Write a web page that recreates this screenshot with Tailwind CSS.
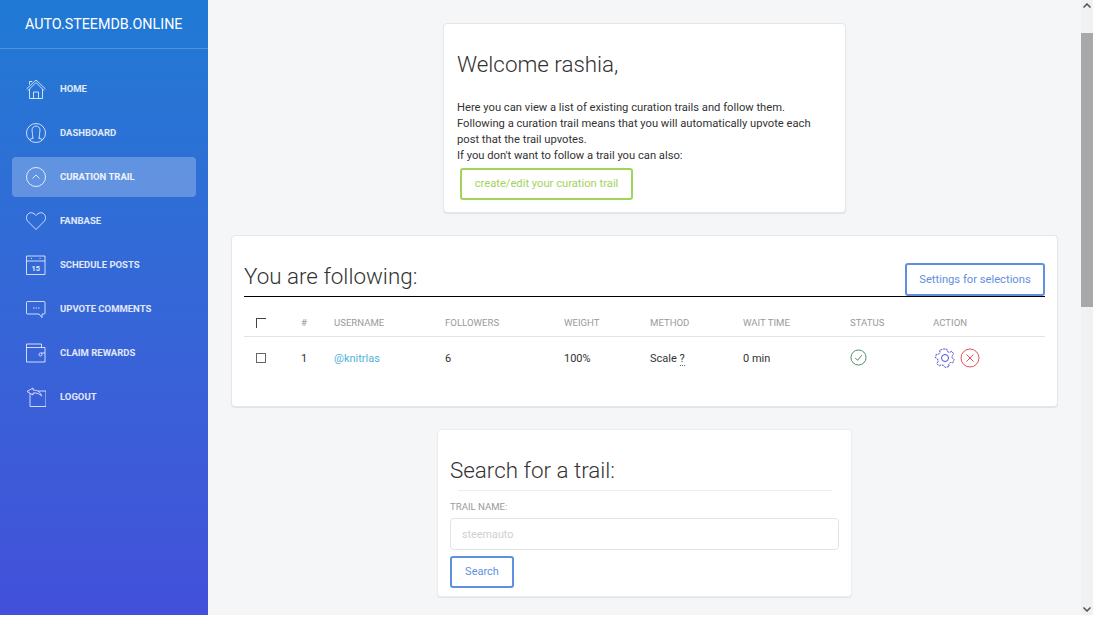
<!DOCTYPE html>
<html lang="en">
<head>
    <meta charset="UTF-8">
    <title>Curation Trail</title>
    <script src="https://cdn.jsdelivr.net/npm/@tailwindcss/browser@4"></script>
</head>
<body class="bg-white font-['Roboto',sans-serif] overflow-hidden">
    <div class="flex w-[1093px] h-[615px] overflow-hidden">
        <!-- Sidebar -->
        <aside class="w-[208px] shrink-0 bg-gradient-to-b from-[#1f7ad4] to-[#4250da] text-white">
            <div class="h-[49px] border-b border-white/20 pl-[25px] pt-[14px] text-[14.3px] leading-[20px]">AUTO.STEEMDB.ONLINE</div>
            <nav class="px-[12px] pt-[20px] flex flex-col gap-[4px]">
                <a class="h-[40px] rounded-[4px] flex items-center pl-[14px] gap-[14px] text-[9.5px] font-bold text-white/85">
                    <svg class="w-[20px] h-[20px]" viewBox="0 0 20 20" fill="none" stroke="currentColor" stroke-width="0.9"><path d="M0.5 10 L10 1 L19.5 10 M2 11.5 L10 3.5 L18 11.5 M3.5 10 V19.5 H16.5 V10 M7.5 19.5 V13 H12.5 V19.5 M3.5 5.5 V2.5 H6 V3"/></svg>
                    HOME
                </a>
                <a class="h-[40px] rounded-[4px] flex items-center pl-[14px] gap-[14px] text-[9.5px] font-bold text-white/85">
                    <svg class="w-[20px] h-[20px]" viewBox="0 0 20 20" fill="none" stroke="currentColor" stroke-width="0.9"><circle cx="10" cy="10" r="9.5"/><path d="M7 16 C7 13 6 10 6 7 C6 4.5 8 3 10 3 C12 3 14 4.5 14 7 C14 10 13 13 13 16 M3.5 16.5 L7 15 M16.5 16.5 L13 15"/></svg>
                    DASHBOARD
                </a>
                <a class="h-[40px] rounded-[4px] bg-white/25 flex items-center pl-[14px] gap-[14px] text-[9.5px] font-bold text-white/90">
                    <svg class="w-[20px] h-[20px]" viewBox="0 0 20 20" fill="none" stroke="currentColor" stroke-width="0.9"><circle cx="10" cy="10" r="9.5"/><path d="M6.5 11.5 L10 8 L13.5 11.5"/></svg>
                    CURATION TRAIL
                </a>
                <a class="h-[40px] rounded-[4px] flex items-center pl-[14px] gap-[14px] text-[9.5px] font-bold text-white/85">
                    <svg class="w-[20px] h-[20px]" viewBox="0 0 20 20" fill="none" stroke="currentColor" stroke-width="0.9"><path d="M10 18.5 L2 10.5 C0 8.5 0 5 2 3 C4 1 7.5 1.3 10 4.5 C12.5 1.3 16 1 18 3 C20 5 20 8.5 18 10.5 Z"/></svg>
                    FANBASE
                </a>
                <a class="h-[40px] rounded-[4px] flex items-center pl-[14px] gap-[14px] text-[9.5px] font-bold text-white/85">
                    <svg class="w-[20px] h-[20px]" viewBox="0 0 20 20" fill="none" stroke="currentColor" stroke-width="0.9"><path d="M0.5 1 H19 V19.5 H0.5 Z M0.5 6 H19 M5 3.5 H6 M13.5 3.5 H14.5"/><text x="9.8" y="16" text-anchor="middle" font-size="7.5" fill="currentColor" stroke="none">15</text></svg>
                    SCHEDULE POSTS
                </a>
                <a class="h-[40px] rounded-[4px] flex items-center pl-[14px] gap-[14px] text-[9.5px] font-bold text-white/85">
                    <svg class="w-[20px] h-[20px]" viewBox="0 0 20 20" fill="none" stroke="currentColor" stroke-width="0.9"><path d="M1.5 2.5 H18 Q19 2.5 19 3.5 V14 Q19 15 18 15 H16 V18.5 L13 15 H1.5 Q0.5 15 0.5 14 V3.5 Q0.5 2.5 1.5 2.5 Z M7 9 H8.5 M9.5 9 H11 M12 9 H13.5"/></svg>
                    UPVOTE COMMENTS
                </a>
                <a class="h-[40px] rounded-[4px] flex items-center pl-[14px] gap-[14px] text-[9.5px] font-bold text-white/85">
                    <svg class="w-[20px] h-[20px]" viewBox="0 0 20 20" fill="none" stroke="currentColor" stroke-width="0.9"><path d="M15.5 4.5 V1 H0.5 V19 H19 V4.5 H0.5 M19 10 H15"/><circle cx="14.5" cy="11.5" r="1.5"/></svg>
                    CLAIM REWARDS
                </a>
                <a class="h-[40px] rounded-[4px] flex items-center pl-[14px] gap-[14px] text-[9.5px] font-bold text-white/85">
                    <svg class="w-[20px] h-[20px]" viewBox="0 0 20 20" fill="none" stroke="currentColor" stroke-width="0.9"><path d="M4 6.5 V19.5 H20 V4 H12 M7 1 L1 4.5 L7 8 V6 C11 5.5 14 7 15.5 9 C15 5.5 11.5 3 7 3 Z"/></svg>
                    LOGOUT
                </a>
            </nav>
        </aside>

        <!-- Main -->
        <main class="flex-1 bg-[#f5f6f8] flex flex-col items-center pt-[23px] gap-[22px]">
            <section class="w-[403px] h-[190px] bg-white rounded-[4px] border border-[#e6e6e6] shadow-[0_1px_1px_rgba(0,0,0,0.08)] pl-[13px] pt-[26px] shrink-0">
                <h1 class="text-[22.4px] leading-[28px] font-light text-[#333]">Welcome rashia,</h1>
                <p class="mt-[22px] text-[11.2px] leading-[16px] text-[#333]">Here you can view a list of existing curation trails and follow them.<br>Following a curation trail means that you will automatically upvote each<br>post that the trail upvotes.<br>If you don't want to follow a trail you can also:</p>
                <button class="block mt-[4px] ml-[3px] w-[173px] h-[32px] border-2 border-[#a3d35c] rounded-[3px] text-[11.2px] text-[#a3d35c]">create/edit your curation trail</button>
            </section>

            <section class="w-[827px] h-[172px] bg-white rounded-[4px] border border-[#e6e6e6] shadow-[0_1px_1px_rgba(0,0,0,0.08)] px-[12px] pt-[28px] shrink-0">
                <div class="flex justify-between items-end border-b border-black h-[33px]">
                    <h2 class="text-[22.4px] leading-[28px] font-light text-[#333] pb-[6px]">You are following:</h2>
                    <button class="w-[140px] h-[33px] pt-[2px] border-2 border-[#5f8fe0] rounded-[3px] text-[11.2px] text-[#5f8fe0]">Settings for selections</button>
                </div>
                <table class="w-[801px] table-fixed text-left">
                    <thead>
                        <tr class="h-[39px] border-b border-[#e3e3e3] text-[9.6px] text-[#9a9a9a]">
                            <th class="w-[57px] pl-[12px] pt-[14px] font-normal"><span class="block w-[10px] h-[10px] border-l border-t border-[#444]"></span></th>
                            <th class="w-[33px] pt-[14px] font-normal">#</th>
                            <th class="w-[111px] pt-[14px] font-normal">USERNAME</th>
                            <th class="w-[119px] pt-[14px] font-normal">FOLLOWERS</th>
                            <th class="w-[86px] pt-[14px] font-normal">WEIGHT</th>
                            <th class="w-[93px] pt-[14px] font-normal">METHOD</th>
                            <th class="w-[107px] pt-[14px] font-normal">WAIT TIME</th>
                            <th class="w-[83px] pt-[14px] font-normal">STATUS</th>
                            <th class="w-[112px] pt-[14px] font-normal">ACTION</th>
                        </tr>
                    </thead>
                    <tbody>
                        <tr class="h-[46px] text-[11px] text-[#333]">
                            <td class="pl-[12px]"><span class="block w-[10px] h-[10px] mb-[2px] border border-[#666]"></span></td>
                            <td>1</td>
                            <td class="text-[#4fb3d9]">@knitrlas</td>
                            <td>6</td>
                            <td>100%</td>
                            <td>Scale <span class="border-b border-dotted border-[#666]">?</span></td>
                            <td>0 min</td>
                            <td>
                                <svg class="w-[17px] h-[17px] mb-[4px]" viewBox="0 0 18 18" fill="none" stroke="#2f7a4a" stroke-width="0.9"><circle cx="9" cy="9" r="8"/><path d="M5.5 9.5 L8 12 L12.5 6.5"/></svg>
                            </td>
                            <td>
                                <div class="flex items-center gap-[5px] pl-[2px] mb-[3px]">
                                    <svg class="w-[20px] h-[20px]" viewBox="0 0 20 20" fill="none" stroke="#3a3ad6" stroke-width="0.9"><path stroke-dasharray="2.2 0.8" d="M8.2 1 H11.8 L12.4 3.6 L14.6 4.5 L16.8 3.2 L18.8 6 L16.9 7.8 L17.2 10 L19.2 11.5 L17.8 14.8 L15.4 14.4 L13.8 16.2 L14 18.6 L10 19.4 L8.6 17.4 L6.2 16.8 L4.2 18 L1.8 15.4 L3.2 13.4 L2.6 11 L0.6 10 L1.2 6.4 L3.6 6.2 L5 4.4 L4.6 2.4 Z"/><circle cx="10" cy="10" r="3.5"/></svg>
                                    <svg class="w-[20px] h-[20px]" viewBox="0 0 20 20" fill="none" stroke="#e0404a" stroke-width="0.9"><circle cx="10" cy="10" r="9"/><path d="M6.5 6.5 L13.5 13.5 M13.5 6.5 L6.5 13.5"/></svg>
                                </div>
                            </td>
                        </tr>
                    </tbody>
                </table>
            </section>

            <section class="w-[415px] h-[168px] bg-white rounded-[4px] border border-[#eee] shadow-[0_1px_1px_rgba(0,0,0,0.08)] pl-[12px] pt-[26px] shrink-0">
                <h2 class="text-[22.4px] leading-[28px] font-light text-[#333]">Search for a trail:</h2>
                <div class="mt-[6px] ml-[8px] w-[374px] border-t border-[#eee]"></div>
                <label class="block mt-[10px] text-[9.6px] leading-[12px] text-[#9a9a9a]">TRAIL NAME:</label>
                <input class="block mt-[5px] w-[389px] h-[32px] border border-[#e3e3e3] rounded-[4px] px-[11px] text-[10.8px] placeholder:text-[#cfcfcf]" placeholder="steemauto">
                <button class="block mt-[6px] w-[64px] h-[32px] border-2 border-[#5f8fe0] rounded-[3px] text-[11px] text-[#5f8fe0]">Search</button>
            </section>
        </main>

        <!-- Scrollbar -->
        <div class="w-[12px] shrink-0 bg-[#f1f1f1] flex flex-col items-center">
            <svg class="w-[8px] h-[5px] mt-[3px] mb-[25px]" viewBox="0 0 8 5" fill="none" stroke="#505050" stroke-width="1.5"><path d="M0.5 4.5 L4 1 L7.5 4.5"/></svg>
            <div class="w-full h-[274px] bg-[#a8a8a8]"></div>
            <svg class="w-[8px] h-[5px] mt-auto mb-[3px]" viewBox="0 0 8 5" fill="none" stroke="#505050" stroke-width="1.5"><path d="M0.5 0.5 L4 4 L7.5 0.5"/></svg>
        </div>
    </div>
</body>
</html>
